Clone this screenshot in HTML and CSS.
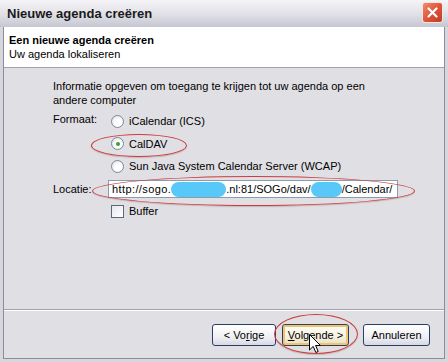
FILE: index.html
```html
<!DOCTYPE html>
<html lang="nl">
<head>
    <meta charset="UTF-8">
    <title>Nieuwe agenda creëren</title>
    <link rel="stylesheet" href="styles.css">
</head>
<body>
    <div class="window">
        <div class="titlebar">
            <span class="title">Nieuwe agenda creëren</span>
            <span class="close">
                <svg width="11" height="11" viewBox="0 0 11 11"><path d="M1.5 1.5 L9.5 9.5 M9.5 1.5 L1.5 9.5" stroke="#fff" stroke-width="2.2" stroke-linecap="round"/></svg>
            </span>
        </div>

        <div class="frame">
            <!-- kop -->
            <div class="header">
                <div class="header-title">Een nieuwe agenda creëren</div>
                <div class="header-sub">Uw agenda lokaliseren</div>
            </div>

            <!-- inhoud -->
            <div class="content">
                <p class="intro">Informatie opgeven om toegang te krijgen tot uw agenda op een andere computer</p>
                <div class="form">
                    <div class="label label-top">Formaat:</div>
                    <label class="option"><span class="radio"></span>iCalendar (ICS)</label>
                    <div></div>
                    <label class="option"><span class="radio checked"></span>CalDAV</label>
                    <div></div>
                    <label class="option"><span class="radio"></span>Sun Java System Calendar Server (WCAP)</label>
                    <div class="label">Locatie:</div>
                    <div class="field"><span class="host">http://sogo.</span><span class="blur blur-1"></span>.nl:81/SOGo/dav/<span class="blur blur-2"></span>/Calendar/</div>
                    <div></div>
                    <label class="option"><span class="check"></span>Buffer</label>
                </div>
            </div>

            <!-- knoppen -->
            <div class="footer">
                <button class="btn btn-prev">&lt; Vo<u>r</u>ige</button>
                <button class="btn btn-next"><u>V</u>olgende &gt;</button>
                <button class="btn btn-cancel">Annuleren</button>
            </div>
        </div>

        <!-- markeringen -->
        <div class="mark mark-caldav"></div>
        <div class="mark mark-url"></div>
        <div class="mark mark-next"></div>
        <svg class="cursor" width="13" height="20" viewBox="0 0 13 20">
            <path d="M0.5 0.5 L0.5 16 L4.2 12.4 L6.8 18.5 L9.2 17.5 L6.6 11.5 L11.5 11.5 Z" fill="#fff" stroke="#000" stroke-width="1"/>
        </svg>
    </div>
</body>
</html>
```

FILE: styles.css
```css
body {
    margin: 0;
    padding: 0;
    background-color: #d6d6de;
    font-family: "Liberation Sans", Arial, sans-serif;
    font-size: 11px;
    color: #000;
}
.window {
    position: relative;
    width: 448px;
    height: 362px;
    box-sizing: border-box;
    padding: 0 3px 3px 3px;
    background: #d6d6de;
    display: flex;
    flex-direction: column;
}
.titlebar {
    height: 27px;
    margin: 0 -3px;
    padding: 0 5px 0 7px;
    display: flex;
    align-items: center;
    justify-content: space-between;
    background: linear-gradient(#f4f4f7, #dfdfe6 55%, #c6c6d2);
}
.title {
    font-size: 13px;
    font-weight: bold;
    color: #1a1a1a;
}
.close {
    width: 19px;
    height: 19px;
    border: 1px solid #f6e6e2;
    border-radius: 3px;
    background: linear-gradient(135deg, #f08a70, #dc5236 55%, #c03c26);
    display: flex;
    align-items: center;
    justify-content: center;
    margin-top: -2px;
}
.frame {
    flex: 1;
    display: flex;
    flex-direction: column;
    border: 1px solid #8c8c98;
    border-top: none;
    background: #e0dfe4;
}
.header {
    height: 41px;
    box-sizing: border-box;
    padding: 6px 0 0 5px;
    background: #fff;
    border-bottom: 1px solid #a2a2ac;
}
.header-title {
    font-weight: bold;
    line-height: 14px;
}
.header-sub {
    line-height: 14px;
}
.content {
    flex: 1;
    padding: 11px 0 0 49px;
    border-bottom: 1px solid #a2a2ac;
}
.intro {
    margin: 0;
    width: 330px;
    line-height: 14px;
}
.form {
    display: grid;
    grid-template-columns: 55px 290px;
    grid-auto-rows: 22.5px;
    margin-top: 3px;
    align-items: center;
}
.label-top {
    align-self: start;
    margin-top: 3px;
}
.option {
    display: flex;
    align-items: center;
    padding-left: 3px;
}
.radio {
    width: 11px;
    height: 11px;
    border: 1px solid #7b8a9c;
    border-radius: 50%;
    background: radial-gradient(circle at 60% 60%, #fff 30%, #dcdce2);
    margin-right: 5px;
    position: relative;
}
.radio.checked::after {
    content: "";
    position: absolute;
    left: 3.5px;
    top: 3.5px;
    width: 4px;
    height: 4px;
    border-radius: 50%;
    background: #36a236;
}
.check {
    width: 11px;
    height: 11px;
    border: 1px solid #5a6a7c;
    background: linear-gradient(135deg, #e8e8ec, #fff);
    margin-right: 5px;
}
.field {
    height: 18px;
    box-sizing: border-box;
    border: 1px solid #8c9cb0;
    background: #fff;
    padding: 0 0 0 3px;
    line-height: 16px;
    white-space: nowrap;
    overflow: hidden;
}
.host {
    letter-spacing: 0.4px;
}
.blur {
    display: inline-block;
    height: 15px;
    vertical-align: -4px;
    background: #58c8f8;
    border-radius: 8px;
}
.blur-1 {
    width: 55px;
}
.blur-2 {
    width: 31px;
}
.footer {
    height: 48px;
    box-sizing: border-box;
    border-top: 1px solid #fff;
    padding: 13px 14px 0 0;
    display: flex;
    justify-content: flex-end;
    align-items: flex-start;
}
.btn {
    height: 22px;
    font-family: "Liberation Sans", Arial, sans-serif;
    font-size: 11px;
    color: #000;
    border: 1px solid #2a3e66;
    border-radius: 3px;
    background: linear-gradient(#ffffff, #f0f0f4 60%, #d8d8e2);
    padding: 0;
}
.btn u {
    text-decoration: underline;
}
.btn-prev {
    width: 64px;
}
.btn-next {
    width: 67px;
    margin-left: 6px;
    box-shadow: inset 0 0 0 2px #f2c46a;
    background: linear-gradient(#fffdf6, #f6f0e0 60%, #e6dcc4);
}
.btn-cancel {
    width: 67px;
    margin-left: 14px;
}
.mark {
    position: absolute;
    border: 1.5px solid #cc3b3b;
    border-radius: 50%;
    box-shadow: 0 1px 1px rgba(120, 60, 60, 0.25);
}
.mark-caldav {
    left: 91px;
    top: 134px;
    width: 94px;
    height: 21px;
}
.mark-url {
    left: 92px;
    top: 176px;
    width: 321px;
    height: 28px;
}
.mark-next {
    left: 274px;
    top: 314px;
    width: 82px;
    height: 38px;
}
.cursor {
    position: absolute;
    left: 309px;
    top: 334px;
}
```
